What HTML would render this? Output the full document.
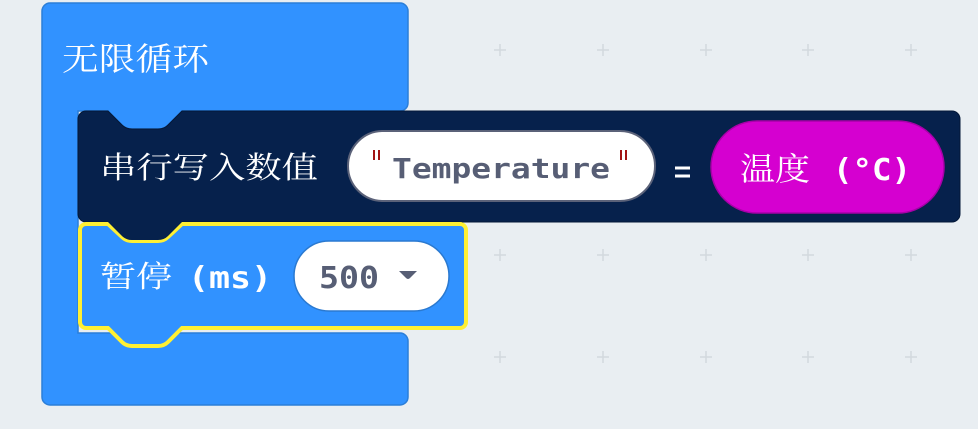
<!DOCTYPE html>
<html><head><meta charset="utf-8"><style>
html,body{margin:0;padding:0;background:#e9eef2;width:978px;height:429px;overflow:hidden}
svg{display:block}
.cjk{font-family:"Liberation Serif","Noto Serif CJK SC",serif;fill:#fff}
.mono{font-family:"DejaVu Sans Mono","Liberation Mono",monospace;font-weight:bold}
</style></head><body>
<svg width="978" height="429" viewBox="0 0 978 429" xmlns="http://www.w3.org/2000/svg">
<g stroke="#d3d9de" stroke-width="1.5">
<g id="p"><path d="M494 50h12M500 44v12"/></g>
<use href="#p" x="103"/><use href="#p" x="206"/><use href="#p" x="308"/><use href="#p" x="411"/>
<use href="#p" y="205"/><use href="#p" x="103" y="205"/><use href="#p" x="206" y="205"/><use href="#p" x="308" y="205"/><use href="#p" x="411" y="205"/>
<use href="#p" y="307"/><use href="#p" x="103" y="307"/><use href="#p" x="206" y="307"/><use href="#p" x="308" y="307"/><use href="#p" x="411" y="307"/>
</g>
<!-- outer loop block -->
<path d="M50 3H400a8 8 0 0 1 8 8V103a8 8 0 0 1-8 8H182L168 125Q164 129 158 129H132Q126 129 122 125L108 111H78V333H400a8 8 0 0 1 8 8V397a8 8 0 0 1-8 8H50a8 8 0 0 1-8-8V11a8 8 0 0 1 8-8Z" fill="#3192ff" stroke="#2b7ed8" stroke-width="1.5"/>
<text x="62" y="70" class="cjk" font-size="32" textLength="147" lengthAdjust="spacingAndGlyphs">无限循环</text>
<!-- serial block -->
<path d="M86 111H108L122 125Q126 129 132 129H158Q164 129 168 125L182 111H952a8 8 0 0 1 8 8V214a8 8 0 0 1-8 8H182L168 236Q164 240 158 240H132Q126 240 122 236L108 222H86a8 8 0 0 1-8-8V119a8 8 0 0 1 8-8Z" fill="#06214c" stroke="#041838" stroke-width="1"/>
<text x="100" y="178" class="cjk" font-size="30" textLength="218" lengthAdjust="spacingAndGlyphs">串行写入数值</text>
<rect x="348" y="131" width="307" height="70" rx="35" fill="#fff" stroke="#5b6279" stroke-width="2"/>
<path d="M374 150v10M379 150v10M621 150v10M626 150v10" stroke="#a31515" stroke-width="2"/>
<text x="392" y="178" class="mono" font-size="28" fill="#575e75" textLength="218" lengthAdjust="spacingAndGlyphs">Temperature</text>
<path d="M675 168h15M675 176h15" stroke="#fff" stroke-width="3"/>
<rect x="711" y="121" width="233" height="92" rx="46" fill="#d500d0" stroke="#a800a8" stroke-width="1.5"/>
<text x="740" y="180" class="cjk" font-size="32" textLength="70" lengthAdjust="spacingAndGlyphs">温度</text>
<text x="833" y="180" class="mono" fill="#fff" font-size="30" textLength="78" lengthAdjust="spacingAndGlyphs">(°C)</text>
<!-- pause block -->
<path d="M86 224H108L122 237Q126 241 132 241H158Q164 241 168 237L182 224H460a6 6 0 0 1 6 6V322a6 6 0 0 1-6 6H182L168 342Q164 346 158 346H132Q126 346 122 342L108 328H86a6 6 0 0 1-6-6V230a6 6 0 0 1 6-6Z" fill="#3192ff" stroke="#fff033" stroke-width="4"/>
<path d="M108 222L122 236Q126 240 132 240H158Q164 240 168 236L182 222Z" fill="#06214c"/>
<text x="100" y="287" class="cjk" font-size="30" textLength="72" lengthAdjust="spacingAndGlyphs">暂停</text>
<text x="188" y="288" class="mono" fill="#fff" font-size="30" textLength="84" lengthAdjust="spacingAndGlyphs">(ms)</text>
<rect x="294" y="241" width="155" height="70" rx="35" fill="#fff" stroke="#2a79d0" stroke-width="1.5"/>
<text x="319" y="288" class="mono" font-size="30" fill="#575e75" textLength="60" lengthAdjust="spacingAndGlyphs">500</text>
<path d="M399 271h18l-7 7q-2 2-4 0Z" fill="#575e75"/>
</svg>
</body></html>
